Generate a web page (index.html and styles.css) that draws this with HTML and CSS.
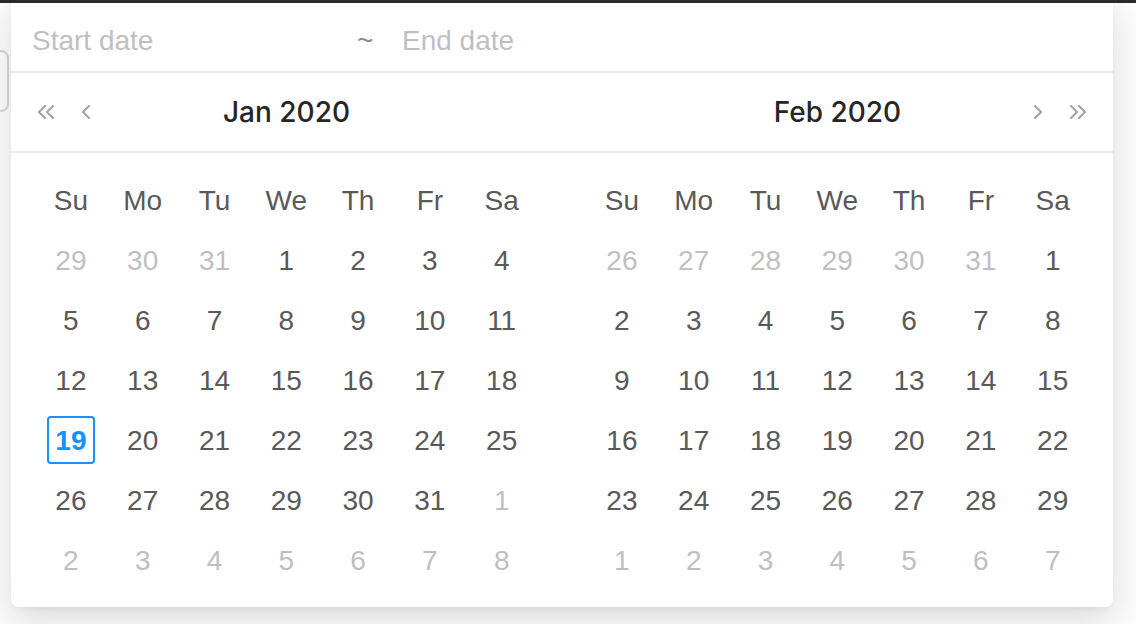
FILE: index.html
```html
<!DOCTYPE html>
<html lang="en">
<head>
  <meta charset="UTF-8">
  <meta name="viewport" content="width=device-width, initial-scale=1.0">
  <title>Range Picker</title>
  <link rel="stylesheet" href="styles.css">
</head>
<body>
  <div class="topbar"></div>
  <div class="picker-input"></div>
  <div class="dropdown">
    <div class="range-inputs">
      <span class="start">Start date</span>
      <span class="sep">~</span>
      <span class="end">End date</span>
    </div>
    <div class="panels" id="panels"></div>
  </div>
<script>
const months = [
  { title: "Jan 2020", before: [29, 30, 31], days: 31, side: "left" },
  { title: "Feb 2020", before: [26, 27, 28, 29, 30, 31], days: 29, side: "right" }
];
const weekdays = ["Su", "Mo", "Tu", "We", "Th", "Fr", "Sa"];
const selected = "Jan 2020-19";

const icons = {
  superPrev: '<svg width="20" height="14" viewBox="0 0 20 14"><path d="M9 1L3 7l6 6M17 1l-6 6 6 6"/></svg>',
  prev: '<svg width="10" height="14" viewBox="0 0 10 14"><path d="M8 1L2 7l6 6"/></svg>',
  next: '<svg width="10" height="14" viewBox="0 0 10 14"><path d="M2 1l6 6-6 6"/></svg>',
  superNext: '<svg width="20" height="14" viewBox="0 0 20 14"><path d="M3 1l6 6-6 6M11 1l6 6-6 6"/></svg>'
};

const panels = document.getElementById("panels");

months.forEach(m => {
  const panel = document.createElement("div");
  panel.className = "panel " + m.side;

  const hideLeft = m.side === "right" ? " hidden" : "";
  const hideRight = m.side === "left" ? " hidden" : "";
  panel.innerHTML = `
    <div class="header">
      <button class="nav${hideLeft}">${icons.superPrev}</button>
      <button class="nav${hideLeft}">${icons.prev}</button>
      <div class="title">${m.title}</div>
      <button class="nav${hideRight}">${icons.next}</button>
      <button class="nav${hideRight}">${icons.superNext}</button>
    </div>
    <div class="body"><div class="grid"></div></div>`;

  const grid = panel.querySelector(".grid");
  weekdays.forEach(w => {
    const th = document.createElement("div");
    th.className = "cell week";
    th.innerHTML = `<span class="day">${w}</span>`;
    grid.appendChild(th);
  });

  const cells = [];
  m.before.forEach(d => cells.push({ d, out: true }));
  for (let d = 1; d <= m.days; d++) cells.push({ d, out: false });
  let next = 1;
  while (cells.length < 42) cells.push({ d: next++, out: true });

  cells.forEach(c => {
    const cell = document.createElement("div");
    cell.className = "cell" + (c.out ? " out" : "");
    const cls = !c.out && `${m.title}-${c.d}` === selected ? "day today" : "day";
    cell.innerHTML = `<span class="${cls}">${c.d}</span>`;
    grid.appendChild(cell);
  });

  panels.appendChild(panel);
});
</script>
</body>
</html>
```

FILE: styles.css
```css
* {
  box-sizing: border-box;
}
body {
  margin: 0;
  height: 624px;
  overflow: hidden;
  position: relative;
  background-color: #fff;
  font-family: "Liberation Sans", Arial, sans-serif;
}
.topbar {
  position: absolute;
  top: 0;
  left: 0;
  right: 0;
  height: 3px;
  background-color: #2a2a2a;
  z-index: 3;
}
.picker-input {
  position: absolute;
  left: -100px;
  top: 50px;
  width: 109px;
  height: 62px;
  border: 2px solid #d9d9d9;
  border-radius: 8px;
}
.dropdown {
  position: absolute;
  left: 11px;
  top: -6px;
  width: 1102px;
  background-color: #fff;
  border-radius: 8px;
  box-shadow: 0 6px 12px -8px rgba(0, 0, 0, 0.12), 0 12px 32px 0 rgba(0, 0, 0, 0.08), 0 18px 56px 16px rgba(0, 0, 0, 0.05);
  z-index: 2;
}
.range-inputs {
  display: flex;
  height: 79px;
  padding: 31px 0 0 21px;
  border-bottom: 2px solid #ebebeb;
  font-size: 28px;
  line-height: 32px;
  color: #bfbfbf;
}
.start {
  width: 325px;
}
.sep {
  width: 45px;
  color: #8c8c8c;
}
.panels {
  display: flex;
}
.panel {
  flex: 1;
}
.header {
  display: flex;
  align-items: center;
  height: 80px;
  padding: 0 15px;
  border-bottom: 2px solid #ebebeb;
}
.nav {
  width: 40px;
  height: 40px;
  padding: 0;
  border: none;
  background: none;
  display: flex;
  align-items: center;
  justify-content: center;
  color: #a6a6a6;
  cursor: pointer;
}
.nav svg {
  fill: none;
  stroke: currentColor;
  stroke-width: 2.2;
  stroke-linecap: round;
  stroke-linejoin: round;
}
.nav.hidden {
  visibility: hidden;
}
.title {
  flex: 1;
  text-align: center;
  font-family: Inter, "Liberation Sans", sans-serif;
  font-size: 28px;
  font-weight: 500;
  color: #262626;
}
.body {
  padding: 17px 23px 17px 24px;
}
.grid {
  display: grid;
  grid-template-columns: repeat(7, 71.8px);
  grid-auto-rows: 60px;
}
.cell {
  display: flex;
  align-items: center;
  justify-content: center;
  font-size: 28px;
  line-height: 32px;
  color: #595959;
}
.cell.out {
  color: #bfbfbf;
}
.day {
  width: 48px;
  height: 48px;
  padding-top: 2px;
  display: flex;
  align-items: center;
  justify-content: center;
  border-radius: 4px;
}
.day.today {
  border: 2px solid #1890ff;
  color: #1890ff;
  font-weight: bold;
}
```
